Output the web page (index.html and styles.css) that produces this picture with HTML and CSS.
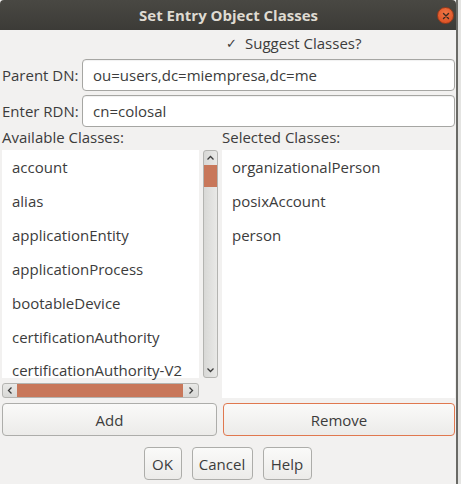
FILE: index.html
```html
<!DOCTYPE html>
<html>
<head>
<meta charset="utf-8">
<title>Set Entry Object Classes</title>
<link rel="stylesheet" href="styles.css">
</head>
<body>
<div class="screen">
  <div class="window">
    <div class="titlebar">
      <span class="title">Set Entry Object Classes</span>
      <span class="close">
        <svg width="10" height="10" viewBox="0 0 10 10"><path d="M2.5 2.5 L7.5 7.5 M7.5 2.5 L2.5 7.5" stroke="#3a2a22" stroke-width="1.4" stroke-linecap="round"/></svg>
      </span>
    </div>
    <div class="body">
      <div class="suggest"><span class="check">✓</span><span>Suggest Classes?</span></div>
      <div class="field">
        <span class="label">Parent DN:</span>
        <div class="input">ou=users,dc=miempresa,dc=me</div>
      </div>
      <div class="field last">
        <span class="label">Enter RDN:</span>
        <div class="input">cn=colosal</div>
      </div>
      <div class="headers">
        <span>Available Classes:</span>
        <span>Selected Classes:</span>
      </div>
      <div class="lists">
        <div class="left">
          <div class="list">
            <div class="item">account</div>
            <div class="item">alias</div>
            <div class="item">applicationEntity</div>
            <div class="item">applicationProcess</div>
            <div class="item">bootableDevice</div>
            <div class="item">certificationAuthority</div>
            <div class="item partial">certificationAuthority-V2</div>
          </div>
          <div class="vscroll">
            <svg class="arrow up" width="9" height="6" viewBox="0 0 9 6"><path d="M1.5 4.5 L4.5 1.5 L7.5 4.5" fill="none" stroke="#3c3c3c" stroke-width="1.3"/></svg>
            <div class="vthumb"></div>
            <div class="vspace"></div>
            <svg class="arrow down" width="9" height="6" viewBox="0 0 9 6"><path d="M1.5 1.5 L4.5 4.5 L7.5 1.5" fill="none" stroke="#3c3c3c" stroke-width="1.3"/></svg>
          </div>
          <div class="hscroll">
            <svg class="harrow" width="6" height="9" viewBox="0 0 6 9"><path d="M4.5 1.5 L1.5 4.5 L4.5 7.5" fill="none" stroke="#3c3c3c" stroke-width="1.3"/></svg>
            <div class="hthumb"></div>
            <svg class="harrow" width="6" height="9" viewBox="0 0 6 9"><path d="M1.5 1.5 L4.5 4.5 L1.5 7.5" fill="none" stroke="#3c3c3c" stroke-width="1.3"/></svg>
          </div>
        </div>
        <div class="list right">
          <div class="item">organizationalPerson</div>
          <div class="item">posixAccount</div>
          <div class="item">person</div>
        </div>
      </div>
      <div class="actions">
        <button class="btn">Add</button>
        <button class="btn focus">Remove</button>
      </div>
      <div class="dialog-buttons">
        <button class="btn ok">OK</button>
        <button class="btn cancel">Cancel</button>
        <button class="btn help">Help</button>
      </div>
    </div>
  </div>
  <div class="edge"></div>
</div>
</body>
</html>
```
FILE: styles.css
```css
* { box-sizing: border-box; }
html, body { margin: 0; padding: 0; }
body {
  width: 461px;
  height: 484px;
  overflow: hidden;
  background: #f2f1f0;
  font-family: "Open Sans", "Noto Sans", sans-serif;
  font-size: 15px;
  color: #3c3c3c;
}
.screen {
  display: flex;
  height: 484px;
}
.window {
  width: 456px;
  display: flex;
  flex-direction: column;
  background: #f2f1f0;
}
.edge {
  flex: 1;
  background: #e4e4e2;
  border-left: 2px solid #6a6a66;
}
.titlebar {
  height: 30px;
  background: linear-gradient(#494843, #3c3b37);
  display: flex;
  align-items: center;
  justify-content: center;
  position: relative;
  border-radius: 4px 4px 0 0;
}
.title {
  color: #dfdbd2;
  font-weight: bold;
  font-size: 15px;
  margin-left: 1px;
}
.close {
  position: absolute;
  right: 2px;
  top: 7px;
  width: 17px;
  height: 17px;
  border-radius: 50%;
  background: radial-gradient(circle at 50% 35%, #f07746, #d9491d);
  border: 1px solid #9b3a1a;
  display: flex;
  align-items: center;
  justify-content: center;
}
.body {
  padding: 0 1px 0 2px;
  display: flex;
  flex-direction: column;
}
.suggest {
  height: 29px;
  display: flex;
  align-items: center;
  padding-left: 224px;
  padding-bottom: 3px;
  gap: 8px;
}
.check { font-size: 13px; }
.field {
  display: flex;
  align-items: center;
  height: 32px;
  margin-bottom: 4px;
  padding-bottom: 1px;
}
.field.last { margin-bottom: 0; }
.label {
  width: 80px;
  flex: none;
}
.input {
  flex: 1;
  height: 32px;
  background: #ffffff;
  border: 1px solid #a6a6a3;
  border-radius: 4px;
  box-shadow: inset 0 1px 1px rgba(0,0,0,0.06);
  padding-left: 10px;
  display: flex;
  align-items: center;
}
.headers {
  display: grid;
  grid-template-columns: 220px 1fr;
  height: 23px;
  align-items: center;
  padding-bottom: 3px;
}
.lists {
  display: grid;
  grid-template-columns: 216px 1fr;
  column-gap: 4px;
  height: 248px;
}
.left {
  display: grid;
  grid-template-columns: 197px 15px;
  grid-template-rows: 228px 15px;
  column-gap: 4px;
  row-gap: 5px;
}
.list {
  background: #ffffff;
}
.item {
  height: 34px;
  line-height: 16px;
  padding: 9px 0 0 10px;
  white-space: nowrap;
}
.item.partial {
  height: 24px;
  line-height: 15px;
}
.vscroll {
  background: linear-gradient(90deg, #d8d8d6, #e9e9e7);
  border: 1px solid #b4b4b1;
  border-radius: 3px;
  display: flex;
  flex-direction: column;
  align-items: center;
}
.arrow { flex: none; margin: 4px 0; }
.vthumb {
  width: 13px;
  height: 22px;
  background: #c8775a;
  flex: none;
}
.vspace { flex: 1; }
.hscroll {
  grid-column: 1;
  background: linear-gradient(#e9e9e7, #d8d8d6);
  border: 1px solid #b4b4b1;
  border-radius: 3px;
  display: flex;
  align-items: center;
  padding: 0 4px;
}
.harrow { flex: none; }
.hthumb {
  flex: 1;
  height: 13px;
  background: #c8775a;
  margin: 0 5px 0 4px;
}
.right { height: 248px; }
.actions {
  display: grid;
  grid-template-columns: 215px 1fr;
  column-gap: 6px;
  margin-top: 5px;
  height: 33px;
}
.btn {
  font-family: inherit;
  font-size: 15px;
  color: #3c3c3c;
  background: linear-gradient(#fafaf9, #ecebe9);
  border: 1px solid #adadaa;
  border-radius: 4px;
  height: 33px;
  padding: 0;
}
.btn.focus { border-color: #e0784f; }
.dialog-buttons {
  display: flex;
  justify-content: center;
  gap: 10px;
  margin-top: 11px;
  padding-right: 2px;
}
.ok { width: 38px; }
.cancel { width: 61px; }
.help { width: 49px; }
```
